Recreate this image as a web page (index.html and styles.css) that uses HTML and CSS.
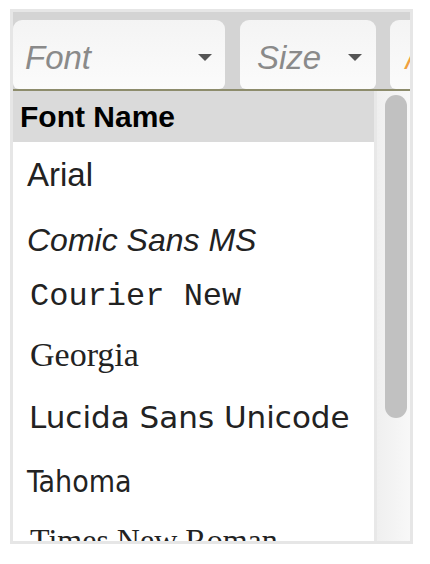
FILE: index.html
```html
<!DOCTYPE html>
<html>
<head>
<meta charset="utf-8">
<link rel="stylesheet" href="styles.css">
</head>
<body>
<div class="frame">
  <div class="toolbar">
    <div class="combo combo-font"><span class="combo-label">Font</span><span class="caret"></span></div>
    <div class="combo combo-size"><span class="combo-label">Size</span><span class="caret"></span></div>
    <div class="combo combo-color"><span class="combo-label orange">/</span></div>
  </div>
  <div class="panel">
    <div class="list">
      <div class="list-head">Font Name</div>
      <div class="item f-arial">Arial</div>
      <div class="item f-comic">Comic Sans MS</div>
      <div class="item f-courier">Courier New</div>
      <div class="item f-georgia">Georgia</div>
      <div class="item f-lucida">Lucida Sans Unicode</div>
      <div class="item f-tahoma">Tahoma</div>
      <div class="item f-times">Times New Roman</div>
    </div>
    <div class="scrollbar"><div class="thumb"></div></div>
  </div>
</div>
</body>
</html>
```
FILE: styles.css
```css
html, body {
  margin: 0;
  padding: 0;
  background: #ffffff;
}
body {
  font-family: "Liberation Sans", Arial, sans-serif;
}
.frame {
  margin: 9px 0 0 10px;
  width: 403px;
  height: 535px;
  box-sizing: border-box;
  border: 3px solid #e6e6e6;
  display: flex;
  flex-direction: column;
  overflow: hidden;
}
.toolbar {
  height: 77px;
  flex: 0 0 auto;
  background: #d4d4d4;
  display: flex;
  align-items: flex-end;
  overflow: hidden;
  border-bottom: 2px solid #8d8c6c;
}
.combo {
  flex: 0 0 auto;
  height: 69px;
  box-sizing: border-box;
  background: linear-gradient(#f4f4f4, #fbfbfb);
  border-radius: 9px 9px 6px 6px;
  display: flex;
  align-items: center;
  justify-content: space-between;
  padding-top: 6px;
}
.combo-font {
  width: 212px;
  padding-left: 12px;
  padding-right: 13px;
}
.combo-size {
  width: 136px;
  margin-left: 15px;
  padding-left: 17px;
  padding-right: 14px;
}
.combo-color {
  width: 80px;
  margin-left: 14px;
  padding-left: 16px;
}
.combo-label {
  font-style: italic;
  font-size: 33px;
  color: #8a8a8a;
}
.orange {
  color: #f0a040;
}
.caret {
  width: 0;
  height: 0;
  border-left: 7px solid transparent;
  border-right: 7px solid transparent;
  border-top: 7px solid #555555;
}
.panel {
  flex: 1 1 auto;
  display: flex;
  min-height: 0;
}
.list {
  flex: 1 1 auto;
  background: #ffffff;
  overflow: hidden;
}
.list-head {
  height: 51px;
  line-height: 51px;
  background: #dadada;
  font-weight: bold;
  font-size: 30px;
  color: #000000;
  padding-left: 7px;
}
.item {
  padding-left: 14px;
  color: #222222;
  white-space: nowrap;
}
.f-arial {
  font-family: "Liberation Sans", Arial, sans-serif;
  font-size: 33px;
  height: 66px;
  line-height: 66px;
}
.f-comic {
  font-family: "Liberation Sans", sans-serif;
  font-style: italic;
  font-size: 32px;
  height: 60px;
  line-height: 64px;
}
.f-courier {
  font-family: "Liberation Mono", "Courier New", monospace;
  font-size: 32px;
  height: 57px;
  line-height: 57px;
  padding-left: 17px;
}
.f-georgia {
  font-family: "Liberation Serif", Georgia, serif;
  font-size: 34px;
  height: 60px;
  line-height: 60px;
  padding-left: 17px;
}
.f-lucida {
  font-family: "DejaVu Sans", sans-serif;
  font-size: 31px;
  height: 64px;
  line-height: 64px;
  padding-left: 16px;
}
.f-tahoma {
  font-family: "DejaVu Sans Condensed", "DejaVu Sans", sans-serif;
  font-stretch: condensed;
  font-size: 30px;
  height: 62px;
  line-height: 66px;
}
.f-times {
  font-family: "Liberation Serif", "Times New Roman", serif;
  font-size: 32px;
  height: 58px;
  line-height: 58px;
  padding-left: 17px;
}
.scrollbar {
  flex: 0 0 auto;
  width: 36px;
  box-sizing: border-box;
  border-left: 3px solid #e8e8e8;
  background: linear-gradient(to right, #efefef, #f8f8f8);
  padding: 4px 3px 0 8px;
}
.thumb {
  width: 22px;
  height: 323px;
  border-radius: 11px;
  background: #c1c1c1;
}
```
